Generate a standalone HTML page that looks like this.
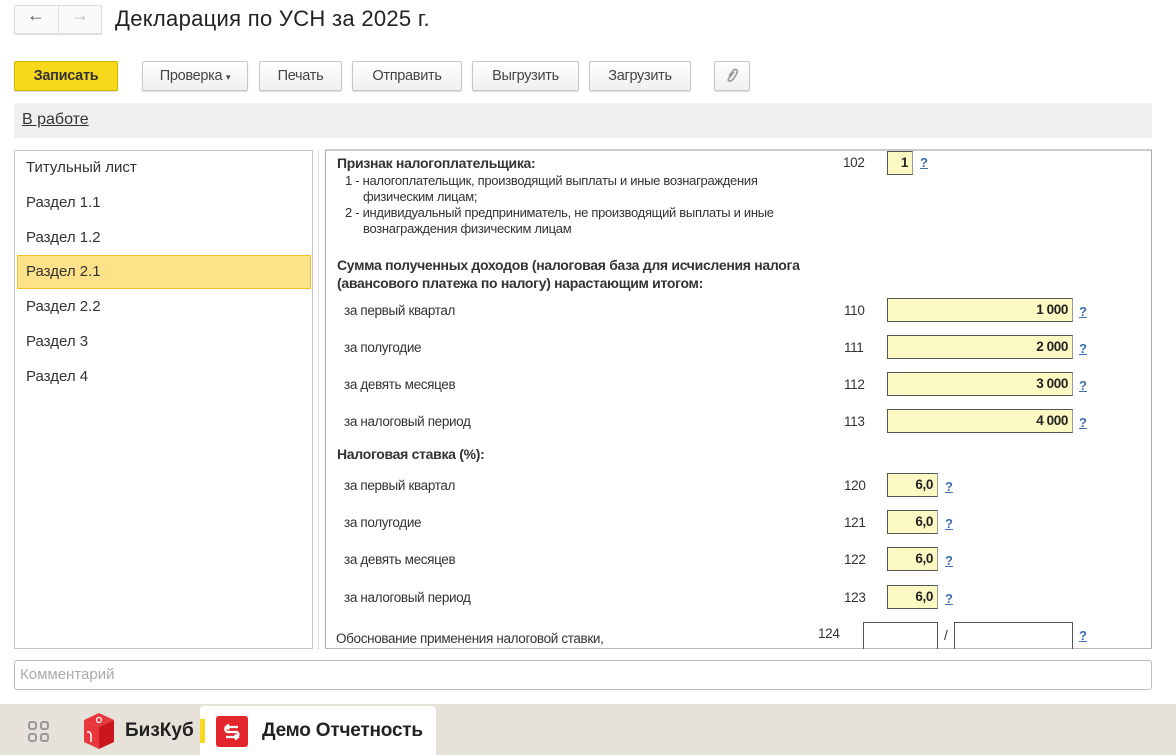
<!DOCTYPE html>
<html><head><meta charset="utf-8"><style>
*{box-sizing:border-box;margin:0;padding:0}
body{width:1176px;height:755px;position:relative;background:#fff;font-family:"Liberation Sans",Arial,sans-serif;color:#333;overflow:hidden}
.a{position:absolute}
.btn{position:absolute;top:61px;height:30px;border:1px solid #c8c8c8;border-radius:2px;background:linear-gradient(#fff,#f0f0f0);box-shadow:0 1px 1px rgba(0,0,0,.15);font-size:14.5px;color:#444;text-align:center;line-height:28px;letter-spacing:-.3px}
.c{font-size:13.5px;letter-spacing:-.35px;color:#333;white-space:nowrap}
.h{font-size:14px;font-weight:bold;letter-spacing:-.3px}
.s{font-size:13px;letter-spacing:-.3px}
.fld{position:absolute;height:24px;background:#fdf9c2;border:1px solid #555;border-right-color:#999;font-size:13.5px;font-weight:bold;text-align:right;padding-right:4px;line-height:22px;color:#222;letter-spacing:-.4px}
.q{position:absolute;font-size:13px;font-weight:bold;color:#3a6fb0;text-decoration:underline}
.li{position:absolute;left:26px;font-size:15px;color:#333}
</style></head><body>
<div class="a" style="left:14px;top:5px;width:88px;height:29px;border:1px solid #ddd;border-radius:2px;background:#fafafa;box-shadow:0 1px 1px rgba(0,0,0,.15)"></div>
<div class="a" style="left:58px;top:6px;width:1px;height:27px;background:#ddd"></div>
<div class="a" style="left:27px;top:5px;font-size:18px;color:#555">&#8592;</div>
<div class="a" style="left:71px;top:5px;font-size:18px;color:#bbb">&#8594;</div>
<div class="a" style="left:115px;top:6px;font-size:22px;color:#222;letter-spacing:.3px">Декларация по УСН за 2025 г.</div>

<div class="btn" style="left:14px;width:104px;background:#f7d81c;border-color:#d2b500;font-weight:bold;color:#333">Записать</div>
<div class="btn" style="left:142px;width:106px">Проверка <span style="font-size:9px">▾</span></div>
<div class="btn" style="left:259px;width:83px">Печать</div>
<div class="btn" style="left:352px;width:110px">Отправить</div>
<div class="btn" style="left:472px;width:107px">Выгрузить</div>
<div class="btn" style="left:589px;width:102px">Загрузить</div>
<div class="btn" style="left:714px;width:36px;color:#999">
<svg width="14" height="16" viewBox="0 0 14 16" style="margin-top:6px"><path d="M9 4 L4 10 Q2 13 5 13 Q7 13 9 10 L12 5 Q13 2 11 1.5 Q9 1 8 3 L4 8" fill="none" stroke="#999" stroke-width="1.6"/></svg></div>

<div class="a" style="left:14px;top:103px;width:1138px;height:35px;background:#efefef"></div>
<div class="a" style="left:22px;top:111px;font-size:16px;color:#333;text-decoration:underline">В работе</div>

<div class="a" style="left:14px;top:150px;width:299px;height:499px;border:1px solid #c8c8c8"></div>
<div class="a" style="left:17px;top:255px;width:294px;height:34px;background:#fde28a;border:1px solid #f2c230"></div>
<div class="li" style="top:159px">Титульный лист</div>
<div class="li" style="top:194px">Раздел 1.1</div>
<div class="li" style="top:229px">Раздел 1.2</div>
<div class="li" style="top:263px">Раздел 2.1</div>
<div class="li" style="top:298px">Раздел 2.2</div>
<div class="li" style="top:333px">Раздел 3</div>
<div class="li" style="top:368px">Раздел 4</div>
<div class="a" style="left:318px;top:150px;width:0;height:499px;border-left:1px dotted #ccc"></div>

<div class="a" style="left:325px;top:149px;width:827px;height:500px;border:1px solid #aaa;border-top:2px solid #ccc;border-bottom-color:#bbb"></div>
<div class="a c h" style="left:337px;top:155px">Признак налогоплательщика:</div>
<div class="a c s" style="left:345px;top:173px">1 - налогоплательщик, производящий выплаты и иные вознаграждения</div>
<div class="a c s" style="left:363px;top:189px">физическим лицам;</div>
<div class="a c s" style="left:345px;top:205px">2 - индивидуальный предприниматель, не производящий выплаты и иные</div>
<div class="a c s" style="left:363px;top:221px">вознаграждения физическим лицам</div>
<div class="a c" style="left:843px;top:155px">102</div>
<div class="fld" style="left:887px;top:151px;width:26px">1</div>
<div class="q" style="left:920px;top:155px">?</div>

<div class="a c h" style="left:337px;top:257px">Сумма полученных доходов (налоговая база для исчисления налога</div>
<div class="a c h" style="left:337px;top:275px">(авансового платежа по налогу) нарастающим итогом:</div>

<div class="a c" style="left:344px;top:303px">за первый квартал</div><div class="a c" style="left:844px;top:303px">110</div>
<div class="fld" style="left:887px;top:298px;width:186px">1 000</div><div class="q" style="left:1079px;top:304px">?</div>
<div class="a c" style="left:344px;top:340px">за полугодие</div><div class="a c" style="left:844px;top:340px">111</div>
<div class="fld" style="left:887px;top:335px;width:186px">2 000</div><div class="q" style="left:1079px;top:341px">?</div>
<div class="a c" style="left:344px;top:377px">за девять месяцев</div><div class="a c" style="left:844px;top:377px">112</div>
<div class="fld" style="left:887px;top:372px;width:186px">3 000</div><div class="q" style="left:1079px;top:378px">?</div>
<div class="a c" style="left:344px;top:414px">за налоговый период</div><div class="a c" style="left:844px;top:414px">113</div>
<div class="fld" style="left:887px;top:409px;width:186px">4 000</div><div class="q" style="left:1079px;top:415px">?</div>

<div class="a c h" style="left:337px;top:446px">Налоговая ставка (%):</div>
<div class="a c" style="left:344px;top:478px">за первый квартал</div><div class="a c" style="left:844px;top:478px">120</div>
<div class="fld" style="left:887px;top:473px;width:51px">6,0</div><div class="q" style="left:945px;top:479px">?</div>
<div class="a c" style="left:344px;top:515px">за полугодие</div><div class="a c" style="left:844px;top:515px">121</div>
<div class="fld" style="left:887px;top:510px;width:51px">6,0</div><div class="q" style="left:945px;top:516px">?</div>
<div class="a c" style="left:344px;top:552px">за девять месяцев</div><div class="a c" style="left:844px;top:552px">122</div>
<div class="fld" style="left:887px;top:547px;width:51px">6,0</div><div class="q" style="left:945px;top:553px">?</div>
<div class="a c" style="left:344px;top:590px">за налоговый период</div><div class="a c" style="left:844px;top:590px">123</div>
<div class="fld" style="left:887px;top:585px;width:51px">6,0</div><div class="q" style="left:945px;top:591px">?</div>

<div class="a c" style="left:336px;top:631px">Обоснование применения налоговой ставки,</div>
<div class="a c" style="left:818px;top:626px">124</div>
<div class="a" style="left:863px;top:622px;width:75px;height:27px;border:1px solid #555;border-bottom:none"></div>
<div class="a c" style="left:944px;top:628px">/</div>
<div class="a" style="left:954px;top:622px;width:119px;height:27px;border:1px solid #555;border-bottom:none"></div>
<div class="q" style="left:1079px;top:628px">?</div>

<div class="a" style="left:14px;top:660px;width:1138px;height:30px;border:1px solid #bbb;border-radius:3px"></div>
<div class="a" style="left:20px;top:666px;font-size:15px;color:#aaa">Комментарий</div>

<div class="a" style="left:0;top:704px;width:1176px;height:51px;background:#e6e2da"></div>
<svg class="a" style="left:28px;top:721px" width="22" height="22" viewBox="0 0 22 22"><g fill="none" stroke="#999" stroke-width="2"><rect x="1" y="1" width="7" height="7" rx="2"/><rect x="13" y="1" width="7" height="7" rx="2"/><rect x="1" y="13" width="7" height="7" rx="2"/><rect x="13" y="13" width="7" height="7" rx="2"/></g></svg>
<svg class="a" style="left:81px;top:712px" width="36" height="38" viewBox="0 0 36 38"><path d="M18 1 L33 8 L18 15 L3 8Z" fill="#e8383d"/><path d="M3 8 L18 15 L18 37 L3 30Z" fill="#e8383d"/><path d="M18 15 L33 8 L33 30 L18 37Z" fill="#c9171d"/><path d="M6 20 Q10 19 10 24 L10 30" stroke="#fff" stroke-width="1.5" fill="none"/><circle cx="18" cy="8" r="2.5" fill="none" stroke="#fff" stroke-width="1.2"/></svg>
<div class="a" style="left:125px;top:720px;font-size:19px;font-weight:bold;color:#222">БизКуб</div>
<div class="a" style="left:200px;top:706px;width:236px;height:49px;background:#fff;border-radius:4px 4px 0 0"></div>
<div class="a" style="left:200px;top:719px;width:5px;height:24px;background:#f7d81c"></div>
<div class="a" style="left:216px;top:716px;width:32px;height:31px;background:#e3262b;border-radius:3px"></div>
<svg class="a" style="left:216px;top:716px" width="32" height="31" viewBox="0 0 32 31"><path d="M10 11 H22 M10 11 Q8 14 11 16 H21 Q24 18 21 21 H10 M19 18.5 L22 21 L19 23.5 M13 8.5 L10 11 L13 13.5" stroke="#fff" stroke-width="2.2" fill="none"/></svg>
<div class="a" style="left:262px;top:720px;font-size:19px;color:#222;font-weight:bold;letter-spacing:-.2px">Демо Отчетность</div>
</body></html>
